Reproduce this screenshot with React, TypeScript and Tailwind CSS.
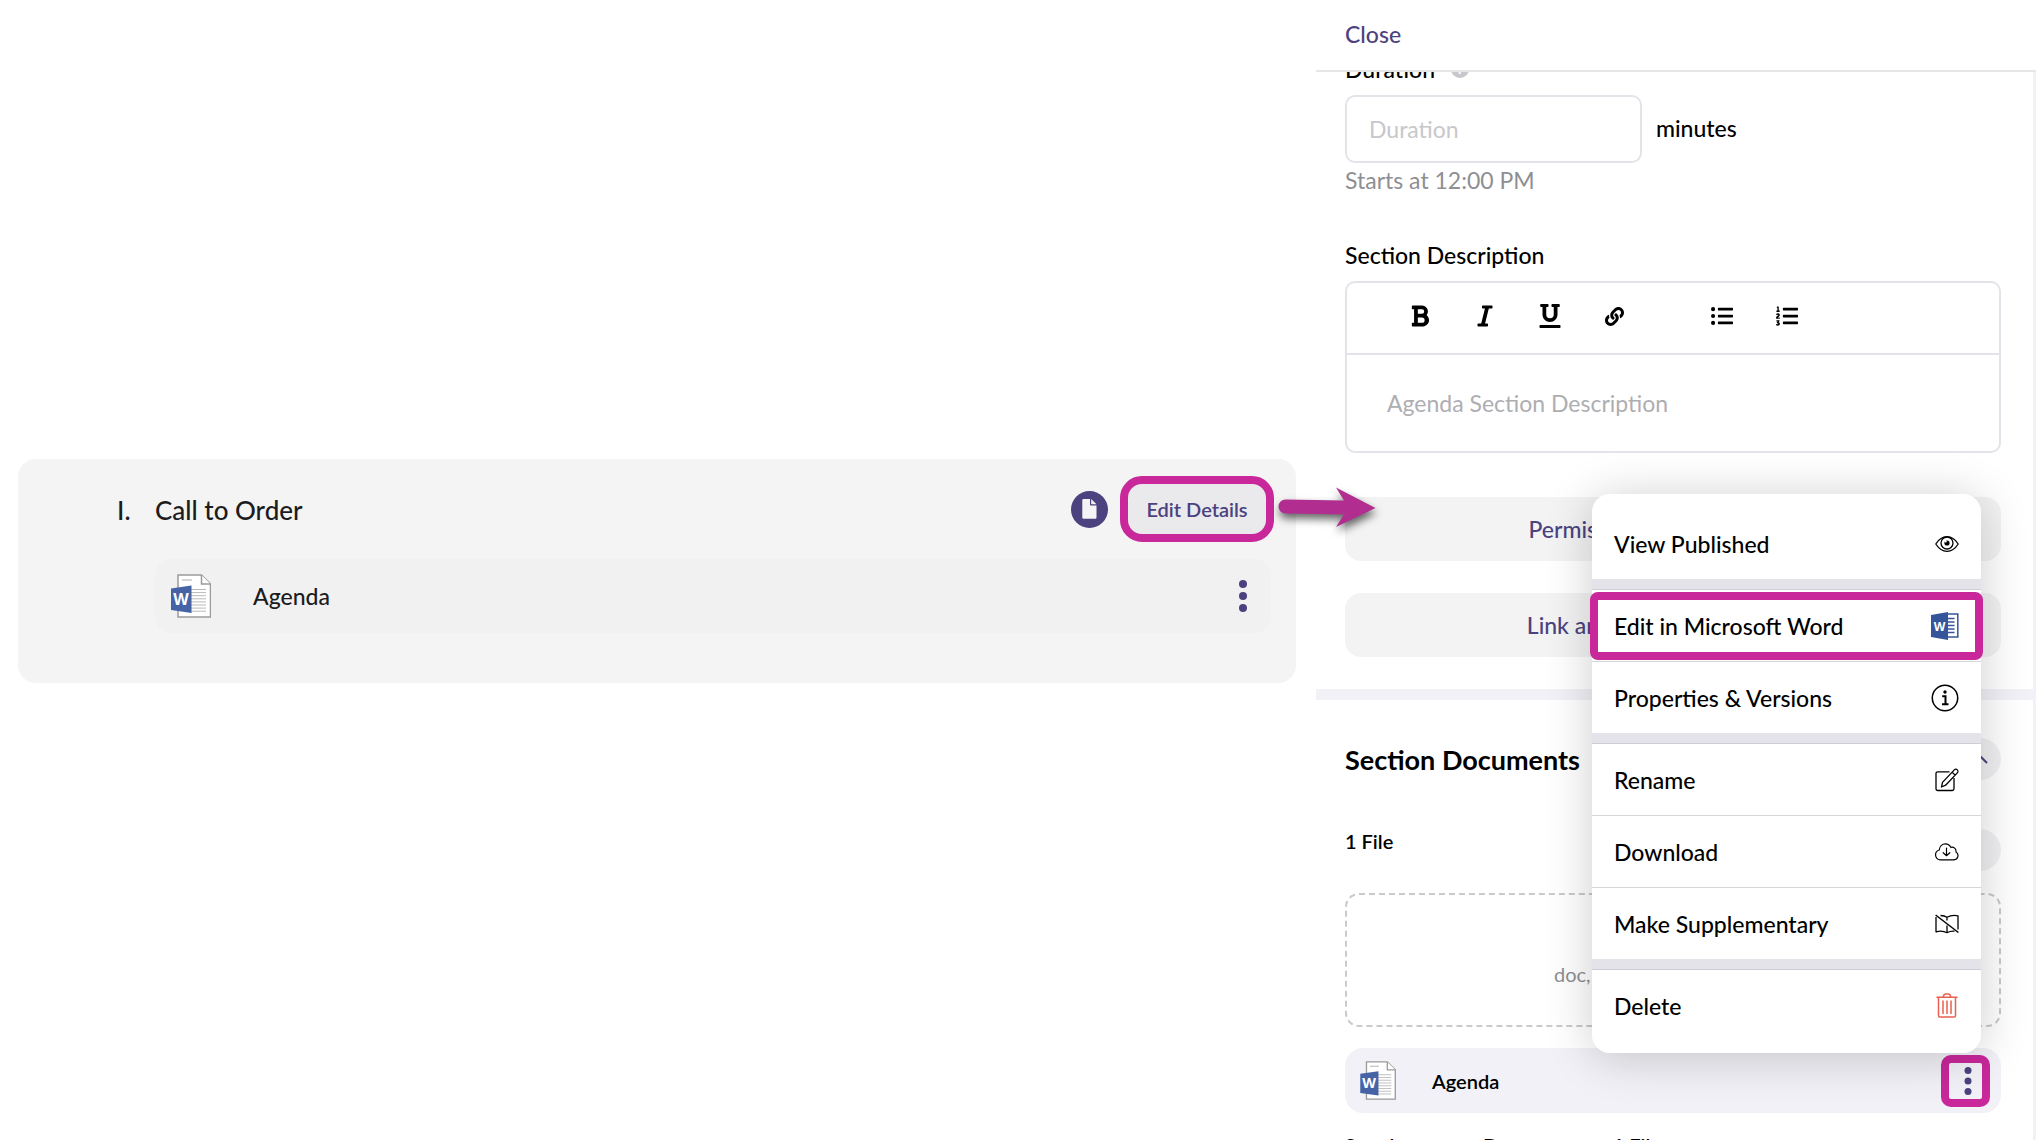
import type { ReactNode } from 'react';
import { FaBold, FaItalic, FaLink, FaListOl, FaListUl, FaUnderline } from 'react-icons/fa';

type MenuItem = {
  label: string;
  icon: ReactNode;
  divider: 'none' | 'line' | 'band';
  highlighted?: boolean;
};

const menuItems: MenuItem[] = [
  { label: 'View Published', icon: <EyeIcon />, divider: 'band' },
  { label: 'Edit in Microsoft Word', icon: <WordAppIcon />, divider: 'line', highlighted: true },
  { label: 'Properties & Versions', icon: <InfoIcon />, divider: 'band' },
  { label: 'Rename', icon: <RenameIcon />, divider: 'line' },
  { label: 'Download', icon: <CloudDownloadIcon />, divider: 'line' },
  { label: 'Make Supplementary', icon: <BookSlashIcon />, divider: 'band' },
  { label: 'Delete', icon: <TrashIcon />, divider: 'none' },
];

export default function App() {
  return (
    <div className="flex h-screen overflow-hidden bg-white pb-2 font-['Lato','Carlito',sans-serif] text-[23px] leading-7 text-black">
      <main className="flex min-w-0 flex-1 items-center pt-0.5 pr-5 pl-[18px]">
        <AgendaSection />
      </main>
      <DetailsPanel />
    </div>
  );
}

function AgendaSection() {
  return (
    <section className="w-full rounded-[18px] bg-[#f4f4f4] pt-[25px] pr-[25px] pb-[50px] pl-[99px] text-[#1c1c1e]">
      <div className="flex items-center pr-[5px]">
        <span className="w-[38px] pt-0.5 text-[26px] font-medium">I.</span>
        <h1 className="flex-1 pt-0.5 text-[26px] font-medium">Call to Order</h1>
        <button aria-label="Section document" className="mr-5 flex size-[37px] items-center justify-center rounded-full bg-[#4b427f]">
          <svg width="15" height="20" viewBox="0 0 15 20" fill="#f4f4f4">
            <path d="M1.500 0H8v5.200C8 6 8.500 6.500 9.300 6.500H14.500V18.500a1.200 1.200 0 0 1-1.200 1.200H1.500A1.200 1.200 0 0 1 .3 18.500V1.200A1.200 1.200 0 0 1 1.500 0Z" />
            <path d="M9.200 0 14.500 5.300H9.900a.7.7 0 0 1-.7-.7Z" />
          </svg>
        </button>
        <div className="relative">
          <button className="h-[50px] w-[138px] rounded-[14px] bg-[#eae9ec] text-[20px] font-semibold text-[#4b427f]">
            Edit Details
          </button>
          <span className="pointer-events-none absolute -inset-2 rounded-[22px] border-8 border-[#c8289a]" />
          <Arrow />
        </div>
      </div>
      <div className="mt-[25px] ml-[38px] flex h-[74px] items-center rounded-2xl bg-[#f1f1f1] pr-4 pl-4">
        <WordFileIcon className="h-11 w-10" />
        <span className="ml-[42px] flex-1 font-medium">Agenda</span>
        <button aria-label="Agenda options" className="flex w-6 justify-center">
          <Dots className="h-8 w-2" />
        </button>
      </div>
    </section>
  );
}

function DetailsPanel() {
  return (
    <aside className="flex w-[720px] shrink-0 flex-col">
      <header className="flex h-[72px] shrink-0 items-center border-b-2 border-[#e6e6e6] px-[29px] pb-0.5">
        <button className="font-medium text-[#4b427f]">Close</button>
      </header>

      <div className="min-h-0 flex-1 overflow-hidden border-r-3 border-[#f2f1f7]">
        <div className="-mt-[17px] pr-8 pl-[29px]">
          <div className="flex items-center gap-4">
            <label htmlFor="duration" className="font-medium">Duration</label>
            <span className="flex size-[18px] items-center justify-center rounded-full bg-[#c7c7cc] text-sm font-bold text-white">?</span>
          </div>
          <div className="mt-3 flex items-center gap-3.5">
            <input
              id="duration"
              placeholder="Duration"
              className="h-[68px] w-[297px] rounded-[10px] border-2 border-[#e4e3ea] px-[22px] placeholder:text-[#c7c7cc]"
            />
            <span className="pb-0.5 font-medium">minutes</span>
          </div>
          <p className="mt-[3px] text-[#8e8e93]">Starts at 12:00 PM</p>

          <h3 className="mt-[47px] font-medium">Section Description</h3>
          <DescriptionEditor />

          <button className="mt-11 block h-16 w-full rounded-2xl bg-[#f3f3f3] font-medium text-[#4b427f]">
            Permissions and Other Rules
          </button>
          <button className="mt-8 block h-16 w-full rounded-2xl bg-[#f3f3f3] font-medium text-[#4b427f]">
            Link an Existing Item or Note
          </button>
        </div>

        <hr className="mt-8 h-[11px] border-0 bg-[#f2f1f7]" />

        <div className="pt-[38px] pr-8 pl-[29px]">
          <div className="flex items-center justify-between">
            <h2 className="pt-0.5 text-[27px] font-bold">Section Documents</h2>
            <button aria-label="Collapse section" className="flex size-[42px] items-center justify-center rounded-full bg-[#f1f1f3]">
              <svg width="16" height="10" viewBox="0 0 16 10" fill="none" stroke="#4b427f" strokeWidth="2">
                <path d="m1 9 7-7 7 7" />
              </svg>
            </button>
          </div>
          <div className="mt-[49px] flex items-start justify-between">
            <span className="text-[20px] leading-6 font-semibold">1 File</span>
            <button aria-label="Add file" className="size-[42px] rounded-full bg-[#f1f1f3]" />
          </div>
          <div className="mt-[22px] flex h-[134px] items-end justify-center rounded-[14px] border-2 border-dashed border-[#c9c9ce] pb-[37px] text-[20px] text-[#8e8e93]">
            doc, docx, xls, xlsx, ppt, pdf
          </div>
          <div className="relative mt-[21px] flex h-[65px] items-center rounded-[18px] bg-[#f2f1f7] pr-[11px] pl-[15px]">
            <WordFileIcon className="h-[39px] w-9" />
            <span className="ml-9 flex-1 text-[20px] font-semibold">Agenda</span>
            <button aria-label="Agenda options" className="flex h-[52px] w-[49px] items-center justify-center rounded-[10px] border-8 border-[#c8289a]">
              <Dots className="ml-1 h-7 w-2" />
            </button>
            <DocumentMenu />
          </div>
          <div className="mt-[18px] flex gap-7 text-[20px] font-semibold">
            <span>Supplementary Documents</span>
            <span>1 File</span>
          </div>
        </div>
      </div>
    </aside>
  );
}

function DescriptionEditor() {
  return (
    <div className="mt-3 rounded-[10px] border-2 border-[#e4e3ea]">
      <div className="flex h-[72px] items-center border-b-2 border-[#e4e3ea] pb-1 pl-10">
        <button aria-label="Bold" className="flex w-[65px] justify-center"><FaBold className="size-6" /></button>
        <button aria-label="Italic" className="flex w-[65px] justify-center"><FaItalic className="size-6" /></button>
        <button aria-label="Underline" className="flex w-[65px] justify-center"><FaUnderline className="size-6" /></button>
        <button aria-label="Link" className="flex w-[65px] justify-center"><FaLink className="size-[19px]" /></button>
        <button aria-label="Bulleted list" className="ml-[42px] flex w-[65px] justify-center"><FaListUl className="size-[22px]" /></button>
        <button aria-label="Numbered list" className="flex w-[65px] justify-center"><FaListOl className="size-[22px]" /></button>
      </div>
      <textarea
        aria-label="Section Description"
        placeholder="Agenda Section Description"
        className="block h-24 w-full resize-none px-10 pt-[34px] placeholder:text-[#aeaeb2]"
      />
    </div>
  );
}

function DocumentMenu() {
  return (
    <ul className="absolute right-5 bottom-[60px] z-10 w-[389px] rounded-[18px] bg-white pt-3.5 pb-3 shadow-[0_4px_48px_rgba(0,0,0,0.2)]">
      {menuItems.map((item) => (
        <li key={item.label} className="relative">
          <button className="flex h-[71px] w-full items-center justify-between pr-[22px] pl-[22px] font-medium">
            {item.label}
            {item.icon}
          </button>
          {item.divider === 'line' ? <div className="h-px bg-[#d6d6da]" /> : null}
          {item.divider === 'band' ? <div className="h-[11px] border-b border-[#cfced6] bg-[#e4e3e9]" /> : null}
          {item.highlighted ? (
            <span className="pointer-events-none absolute -inset-x-0.5 top-0.5 bottom-0.5 rounded-[8px] border-8 border-[#c8289a]" />
          ) : null}
        </li>
      ))}
    </ul>
  );
}

function Arrow() {
  return (
    <svg
      className="pointer-events-none absolute -top-1 left-full z-10 ml-1 overflow-visible drop-shadow-[1px_5px_4px_rgba(0,0,0,0.6)]"
      width="110"
      height="56"
      viewBox="0 0 110 56"
      fill="#b12e90"
    >
      <path d="M15.500 19.500 74 20.500 66 7.500 105.500 28 66 47 74 34.500 15.500 33.500a7 7 0 0 1 0-14Z" />
    </svg>
  );
}

function Dots({ className }: { className: string }) {
  return (
    <svg className={className} viewBox="0 0 8 32" fill="#4b427f">
      <circle cx="4" cy="4" r="4" />
      <circle cx="4" cy="16" r="4" />
      <circle cx="4" cy="28" r="4" />
    </svg>
  );
}

function WordFileIcon({ className }: { className: string }) {
  return (
    <svg className={className} viewBox="0 0 40 44">
      <path d="M7 1h23.500l9 9v33H7Z" fill="#fff" stroke="#9b9b9b" strokeWidth="1.500" />
      <path d="M30.500 1v9h9" fill="#fff" stroke="#9b9b9b" strokeWidth="1.500" />
      <path d="M11 6h10" stroke="#c8c8c8" strokeWidth="1.500" />
      <path d="M20 15.500h15M20 18.600h15M20 21.700h15M20 24.800h15M20 27.900h15M20 31h15M20 34.100h15M20 37.200h15" stroke="#b9b9b9" />
      <path d="M0 14.500 20.500 11.500v27.500L0 36Z" fill="#4563a5" />
      <text x="10" y="31" textAnchor="middle" fontSize="16" fontWeight="700" fill="#fff" fontFamily="Open Sans">W</text>
    </svg>
  );
}

function WordAppIcon() {
  return (
    <svg width="28" height="28" viewBox="0 0 28 28">
      <path d="M15 2h11.800v23H15" fill="#fff" stroke="#35559a" strokeWidth="1.500" />
      <path d="M17 6.500h6.500M17 10h6.500M17 13.500h6.500M17 17h6.500M17 20.500h6.500" stroke="#35559a" strokeWidth="1.500" />
      <path d="M0 3 17 0v28L0 25Z" fill="#35559a" />
      <text x="8.500" y="18.500" textAnchor="middle" fontSize="12" fontWeight="700" fill="#fff" fontFamily="Open Sans">W</text>
    </svg>
  );
}

function EyeIcon() {
  return (
    <svg width="24" height="18" viewBox="0 0 24 18" fill="none" stroke="currentColor" strokeWidth="1.300">
      <path d="M.8 9C4 4 7.800 1.700 12 1.700S20 4 23.200 9C20 14 16.200 16.300 12 16.300S4 14 .8 9Z" />
      <circle cx="12" cy="8" r="6" />
      <circle cx="12" cy="8" r="2.600" fill="currentColor" stroke="none" />
      <circle cx="10.800" cy="6.600" r="1" fill="#fff" stroke="none" />
    </svg>
  );
}

function InfoIcon() {
  return (
    <svg width="28" height="28" viewBox="0 0 28 28" fill="none" stroke="currentColor" strokeWidth="1.500">
      <circle cx="14" cy="14" r="12.700" />
      <circle cx="14" cy="8" r="1.700" fill="currentColor" stroke="none" />
      <path d="M11.200 12.200H14.500V20M11 20.200h6.500" strokeWidth="2" />
    </svg>
  );
}

function RenameIcon() {
  return (
    <svg width="24" height="24" viewBox="0 0 24 24" fill="none" stroke="currentColor" strokeWidth="1.300" strokeLinejoin="round">
      <path d="M14.500 3.800H2.700A1.700 1.700 0 0 0 1 5.500v15.300a1.700 1.700 0 0 0 1.700 1.700h14.600a1.700 1.700 0 0 0 1.700-1.700V10" />
      <path d="m6.500 19 1-4.600L19.300 1.900a2.100 2.100 0 0 1 3 3L10.600 17.200ZM17.200 4.200l2.900 2.900" />
    </svg>
  );
}

function CloudDownloadIcon() {
  return (
    <svg width="24" height="18" viewBox="0 0 24 18" fill="none" stroke="currentColor" strokeWidth="1.200" strokeLinecap="round" strokeLinejoin="round">
      <path d="M5 16.800h14a4.300 4.300 0 0 0 2-7.900c.4-3.200-2.300-5.400-5.200-4.600C14.700 2.300 12.800.9 10.500.9 7 .9 4.500 3.600 4.300 7A5 5 0 0 0 5 16.800Z" />
      <path d="M11.500 5v7.500M8.200 9.700l3.300 3 3.300-3" />
    </svg>
  );
}

function BookSlashIcon() {
  return (
    <svg width="24" height="20" viewBox="0 0 24 20" fill="none" stroke="currentColor" strokeWidth="1.300" strokeLinejoin="round">
      <path d="M.6 1 23.400 18.500" strokeWidth="1.500" />
      <path d="M1 3v14.800c3.600-1 7.500-1 11 .9 2.400-1.300 5-1.700 7.500-1.500M12 11.500v7.200M5.500 1.500c2.500.1 4.700.6 6.500 1.800 3.200-1.800 7.300-2.300 11-1.500v13.700M12 3.300v3.200" />
    </svg>
  );
}

function TrashIcon() {
  return (
    <svg width="24" height="25" viewBox="0 0 24 25" fill="none" stroke="#e8604f" strokeWidth="1.500" strokeLinecap="round">
      <path d="M2 4.300h20M8.200 4c.3-2 1.300-3 2.600-3h2.400c1.300 0 2.300 1 2.600 3" />
      <path d="M3.500 4.500v18a1.600 1.600 0 0 0 1.600 1.600h13.800a1.600 1.600 0 0 0 1.600-1.600v-18M8 8v12.500M12 8v12.500M16 8v12.500" />
    </svg>
  );
}
